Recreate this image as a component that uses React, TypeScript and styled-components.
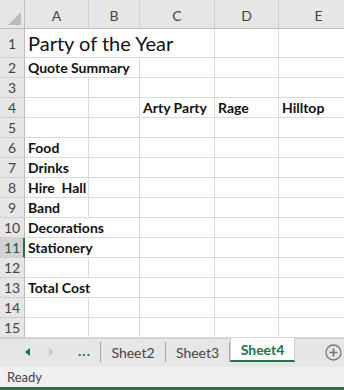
import React from 'react';
import styled, { createGlobalStyle } from 'styled-components';

const GlobalStyle = createGlobalStyle`
  html, body {
    margin: 0;
    padding: 0;
    background: #fff;
  }
  body {
    font-family: Lato, "Open Sans", "Liberation Sans", sans-serif;
  }
`;

const Frame = styled.div`
  width: 344px;
  height: 390px;
  overflow: hidden;
  display: flex;
  flex-direction: column;
  background: #fff;
`;

const Sheet = styled.div`
  display: grid;
  grid-template-columns: 25px 64px 51px 75px 64px 80px;
  grid-template-rows: 29px 29px repeat(14, 20px);
  width: 344px;
  overflow: hidden;
`;

const Corner = styled.div`
  position: relative;
  background: #e6e6e6;
  border-right: 1px solid #bdbdbd;
  border-bottom: 1px solid #bdbdbd;

  &::after {
    content: '';
    position: absolute;
    right: 3px;
    bottom: 3px;
    border-left: 13px solid transparent;
    border-bottom: 13px solid #bababa;
  }
`;

const ColHead = styled.div`
  background: #e6e6e6;
  border-right: 1px solid #cfcfcf;
  border-bottom: 1px solid #bdbdbd;
  display: flex;
  align-items: center;
  justify-content: center;
  padding-top: 3px;
  font-size: 14px;
  color: #444;
`;

const RowHead = styled.div<{ $active?: boolean }>`
  background: ${p => (p.$active ? '#d2d2d2' : '#e6e6e6')};
  border-right: ${p => (p.$active ? '2px solid #217346' : '1px solid #bdbdbd')};
  border-bottom: 1px solid #cfcfcf;
  display: flex;
  align-items: center;
  justify-content: center;
  padding-left: ${p => (p.$active ? 1 : 0)}px;
  font-size: 14px;
  color: ${p => (p.$active ? '#1f5f3c' : '#444')};
`;

const Cell = styled.div<{ $span?: number; $title?: boolean }>`
  grid-column: span ${p => p.$span ?? 1};
  border-right: 1px solid #dadada;
  border-bottom: 1px solid #dadada;
  display: flex;
  align-items: flex-end;
  padding: 0 0 ${p => (p.$title ? 2 : 1)}px 3px;
  white-space: pre;
  overflow: hidden;
  font-size: ${p => (p.$title ? 20 : 14)}px;
  font-weight: ${p => (p.$title ? 400 : 700)};
  color: #111;
`;

const TabBar = styled.div`
  height: 28px;
  background: #e6e6e6;
  border-top: 1px solid #cfcfcf;
  display: flex;
  align-items: flex-start;
`;

const Nav = styled.div`
  width: 101px;
  height: 20px;
  margin-top: 3px;
  display: flex;
  align-items: center;
  padding-left: 25px;
  gap: 19px;
  box-sizing: border-box;
  border-right: 1px solid #a8a8a8;
`;

const Arrow = styled.span<{ $dir: 'left' | 'right'; $on?: boolean }>`
  width: 0;
  height: 0;
  border-top: 4px solid transparent;
  border-bottom: 4px solid transparent;
  ${p =>
    p.$dir === 'left'
      ? `border-right: 5px solid ${p.$on ? '#217346' : '#c8c8c8'};`
      : `border-left: 5px solid ${p.$on ? '#217346' : '#c8c8c8'};`}
`;

const Dots = styled.span`
  margin-left: 5px;
  color: #217346;
  font-weight: 700;
  font-size: 14px;
  letter-spacing: 1px;
  line-height: 14px;
  padding-bottom: 2px;
`;

const Tab = styled.div<{ $active?: boolean; $w: number }>`
  width: ${p => p.$w}px;
  display: flex;
  align-items: center;
  justify-content: center;
  box-sizing: border-box;
  font-size: 14px;
  ${p =>
    p.$active
      ? `
    height: 24px;
    margin-top: -1px;
    background: #fff;
    color: #217346;
    font-weight: 700;
    border-bottom: 2px solid #217346;
    border-left: 1px solid #cfcfcf;
    border-right: 1px solid #cfcfcf;
    padding-top: 1px;
  `
      : `
    height: 20px;
    margin-top: 3px;
    color: #444;
    border-right: 1px solid #a8a8a8;
  `}
`;

const Spacer = styled.div`
  flex: 1;
`;

const AddBtn = styled.div`
  width: 18px;
  height: 20px;
  margin: 3px 1px 0 0;
  display: flex;
  align-items: center;
`;

const StatusBar = styled.div`
  flex: 1;
  background: #f0f0f0;
  border-bottom: 3px solid #217346;
  display: flex;
  align-items: center;
  padding-left: 7px;
  font-size: 13px;
  color: #444;
`;

const cols = ['A', 'B', 'C', 'D', 'E'];

type RowDef = { cells: { text?: string; span?: number }[]; title?: boolean };

const blank = () => [{}, {}, {}, {}, {}];

const rows: RowDef[] = [
  { title: true, cells: [{ text: 'Party of the Year', span: 3 }, {}, {}] },
  { cells: [{ text: 'Quote Summary', span: 2 }, {}, {}, {}] },
  { cells: blank() },
  { cells: [{}, {}, { text: 'Arty Party' }, { text: 'Rage' }, { text: 'Hilltop' }] },
  { cells: blank() },
  { cells: [{ text: 'Food' }, {}, {}, {}, {}] },
  { cells: [{ text: 'Drinks' }, {}, {}, {}, {}] },
  { cells: [{ text: 'Hire  Hall' }, {}, {}, {}, {}] },
  { cells: [{ text: 'Band' }, {}, {}, {}, {}] },
  { cells: [{ text: 'Decorations', span: 2 }, {}, {}, {}] },
  { cells: [{ text: 'Stationery', span: 2 }, {}, {}, {}] },
  { cells: blank() },
  { cells: [{ text: 'Total Cost', span: 2 }, {}, {}, {}] },
  { cells: blank() },
  { cells: blank() },
];

function PlusIcon() {
  return (
    <svg width="17" height="17" viewBox="0 0 17 17">
      <circle cx="8.5" cy="8.5" r="7.5" fill="none" stroke="#777" strokeWidth="1.3" />
      <path d="M8.5 4.5v8M4.5 8.5h8" stroke="#777" strokeWidth="1.6" />
    </svg>
  );
}

function App() {
  return (
    <Frame>
      <GlobalStyle />
      <Sheet>
        <Corner />
        {cols.map(c => (
          <ColHead key={c}>{c}</ColHead>
        ))}
        {rows.map((r, i) => (
          <React.Fragment key={i}>
            <RowHead $active={i === 10}>{i + 1}</RowHead>
            {r.cells.map((c, j) => (
              <Cell key={j} $span={c.span} $title={r.title}>
                {c.text}
              </Cell>
            ))}
          </React.Fragment>
        ))}
      </Sheet>
      <TabBar>
        <Nav>
          <Arrow $dir="left" $on />
          <Arrow $dir="right" />
          <Dots>...</Dots>
        </Nav>
        <Tab $w={65}>Sheet2</Tab>
        <Tab $w={64}>Sheet3</Tab>
        <Tab $w={65} $active>Sheet4</Tab>
        <Spacer />
        <AddBtn>
          <PlusIcon />
        </AddBtn>
      </TabBar>
      <StatusBar>Ready</StatusBar>
    </Frame>
  );
}

export default App;
